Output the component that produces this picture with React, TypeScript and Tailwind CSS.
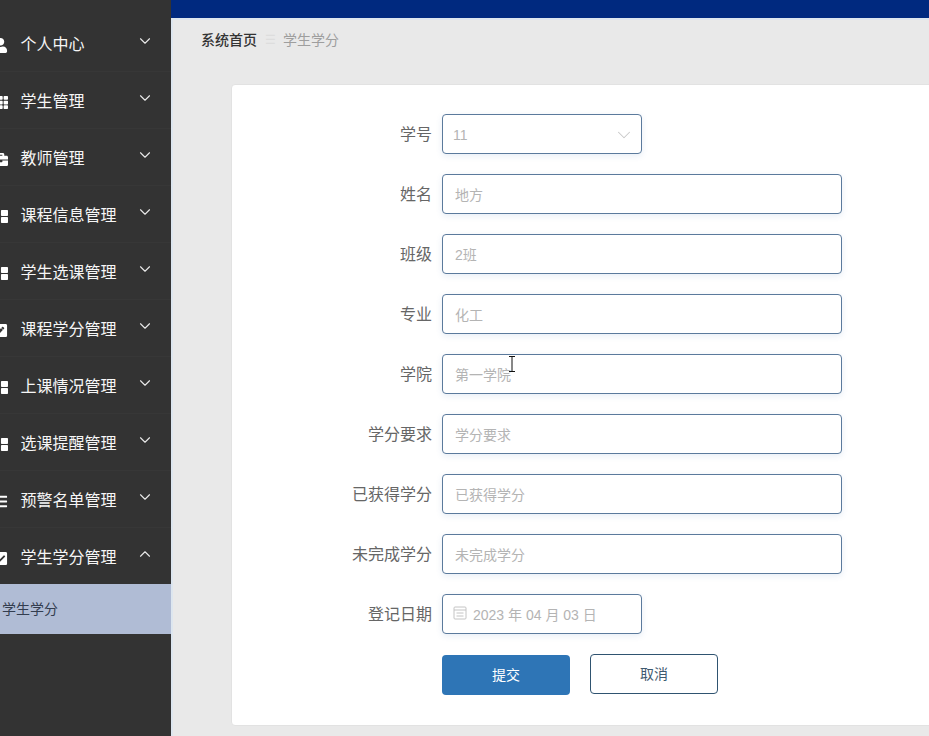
import React from "react";
import { FaUser, FaTh, FaBriefcase, FaThLarge, FaPenSquare, FaBars, FaCheckSquare } from "react-icons/fa";
import { ChevronDown, ChevronUp } from "lucide-react";

const menu: { label: string; Icon: React.ComponentType<{ className?: string }>; open?: boolean }[] = [
  { label: "个人中心", Icon: FaUser },
  { label: "学生管理", Icon: FaTh },
  { label: "教师管理", Icon: FaBriefcase },
  { label: "课程信息管理", Icon: FaThLarge },
  { label: "学生选课管理", Icon: FaThLarge },
  { label: "课程学分管理", Icon: FaPenSquare },
  { label: "上课情况管理", Icon: FaThLarge },
  { label: "选课提醒管理", Icon: FaThLarge },
  { label: "预警名单管理", Icon: FaBars },
  { label: "学生学分管理", Icon: FaCheckSquare, open: true },
];

const fields: { label: string; value: string }[] = [
  { label: "姓名", value: "地方" },
  { label: "班级", value: "2班" },
  { label: "专业", value: "化工" },
  { label: "学院", value: "第一学院" },
  { label: "学分要求", value: "学分要求" },
  { label: "已获得学分", value: "已获得学分" },
  { label: "未完成学分", value: "未完成学分" },
];

function Row({ label, children }: { label: string; children: React.ReactNode }) {
  return (
    <div className="flex h-10 items-center">
      <label className="w-[200px] pr-2.5 pt-0.5 text-right text-base text-[#666666]">{label}</label>
      {children}
    </div>
  );
}

const boxClass =
  "flex h-10 items-center rounded-[4px] border border-[#5b7a9c] bg-white pt-0.5 text-sm text-[#b4b4b4] shadow-[0_2px_6px_rgba(60,110,170,0.12)]";

export default function App() {
  return (
    <div className="flex h-screen w-full overflow-hidden bg-[#e9e9e9] font-['Liberation_Sans','Noto_Sans_CJK_SC',sans-serif]">
      <aside className="flex w-[171px] shrink-0 flex-col overflow-hidden bg-[#333333] pt-[15px]">
        {menu.map(({ label, Icon, open }) => (
          <div
            key={label}
            className={`flex shrink-0 items-center border-b border-[#373737] pt-1 ${open ? "h-[56px] border-b-0" : "h-[57px]"}`}
          >
            <Icon className="ml-[-7px] h-[15px] w-[15px] shrink-0 text-white" />
            <span className="ml-[12.5px] flex-1 whitespace-nowrap text-base text-[#f6f6f6]">{label}</span>
            {open ? (
              <ChevronUp className="mb-2 mr-[17px] h-[18px] w-[18px] shrink-0 text-[#e8e8e8]" strokeWidth={1.5} />
            ) : (
              <ChevronDown className="mb-2 mr-[17px] h-[18px] w-[18px] shrink-0 text-[#e8e8e8]" strokeWidth={1.5} />
            )}
          </div>
        ))}
        <div className="flex h-[50px] shrink-0 items-center bg-[#b0bcd5] pl-0.5 text-sm text-[#333d4f]">学生学分</div>
      </aside>

      <main className="flex min-w-0 flex-1 flex-col">
        <div className="h-[18px] shrink-0 bg-[#00297f]" />
        <div className="flex min-h-0 flex-1 flex-col border-l-2 border-t-2 border-[#dde6ef]">
          <nav className="flex h-10 shrink-0 items-center pl-7 text-sm">
            <span className="font-medium text-[#333333]">系统首页</span>
            <span className="mx-[7.5px] text-xs text-[#dddddd]">☰</span>
            <span className="text-[#9e9e9e]">学生学分</span>
          </nav>
          <div className="ml-[58px] mr-[-20px] mt-6 flex h-[642px] shrink-0 flex-col gap-5 rounded-[4px] border border-[#e2e2e2] bg-white pl-2.5 pt-[29px]">
            <Row label="学号">
              <div className={`${boxClass} w-[200px] justify-between pl-2.5 pr-1.5`}>
                <span>11</span>
                <ChevronDown className="h-[22px] w-[22px] text-[#c8c8c8]" strokeWidth={1.1} />
              </div>
            </Row>
            {fields.map((f) => (
              <Row key={f.label} label={f.label}>
                <div className={`${boxClass} w-[400px] px-3`}>{f.value}</div>
              </Row>
            ))}
            <Row label="登记日期">
              <div className={`${boxClass} w-[200px] gap-1.5 pl-2.5`}>
                <svg viewBox="0 0 14 14" className="mb-1 h-[14px] w-[14px] text-[#c4c4c4]" fill="none" stroke="currentColor" strokeWidth="1">
                  <rect x="1" y="1" width="12" height="12" rx="1" />
                  <path d="M1 4h12M3.5 7h7M3.5 10h7" />
                </svg>
                <span>2023 年 04 月 03 日</span>
              </div>
            </Row>
            <div className="flex h-10 items-start pl-[200px]">
              <button className="mt-px h-10 w-32 rounded-[4px] bg-[#2e75b6] text-sm text-white">提交</button>
              <button className="ml-5 h-10 w-32 rounded-[4px] border border-[#2f5370] bg-white text-sm text-[#3f5a70]">取消</button>
            </div>
          </div>
        </div>
      </main>

      <svg className="absolute left-[508px] top-[356px] h-4 w-2" viewBox="0 0 8 16" fill="none" stroke="#111111" strokeWidth="1">
        <path d="M1 .5h6M4 .5v15M1 15.5h6" />
      </svg>
    </div>
  );
}
